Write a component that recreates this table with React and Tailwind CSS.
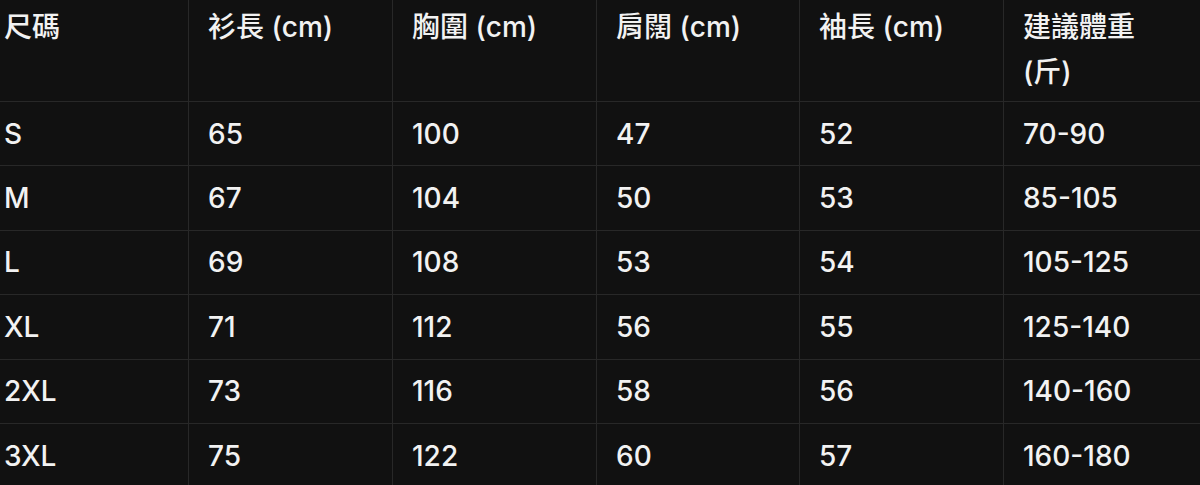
const HEADERS = ["尺碼", "衫長 (cm)", "胸圍 (cm)", "肩闊 (cm)", "袖長 (cm)", "建議體重 (斤)"];

const ROWS = [
  ["S", "65", "100", "47", "52", "70-90"],
  ["M", "67", "104", "50", "53", "85-105"],
  ["L", "69", "108", "53", "54", "105-125"],
  ["XL", "71", "112", "56", "55", "125-140"],
  ["2XL", "73", "116", "58", "56", "140-160"],
  ["3XL", "75", "122", "60", "57", "160-180"],
];

const COLS = "grid grid-cols-[203px_204px_204px_203px_204px_204px]";

export default function App() {
  return (
    <div
      className="w-[1200px] h-[485px] overflow-hidden bg-[#111111] text-[#f2f2f2] font-medium text-[28px]"
      style={{ fontFamily: "Inter, 'Noto Sans CJK TC', sans-serif" }}
    >
      <div className="-ml-[15px] w-[1222px]">
        <div className={`${COLS} h-[102px] border-b border-[#282828]`}>
          {HEADERS.map((h, i) => (
            <div
              key={h}
              className={`pl-[19px] pr-[40px] pt-[5px] leading-[45px] ${i > 0 ? "border-l border-[#282828]" : ""}`}
            >
              {h}
            </div>
          ))}
        </div>
        {ROWS.map((row) => (
          <div key={row[0]} className={`${COLS} h-[64.4px] border-b border-[#282828]`}>
            {row.map((cell, i) => (
              <div
                key={i}
                className={`pl-[19px] flex items-center ${i > 0 ? "border-l border-[#282828]" : ""}`}
              >
                {cell}
              </div>
            ))}
          </div>
        ))}
      </div>
    </div>
  );
}
